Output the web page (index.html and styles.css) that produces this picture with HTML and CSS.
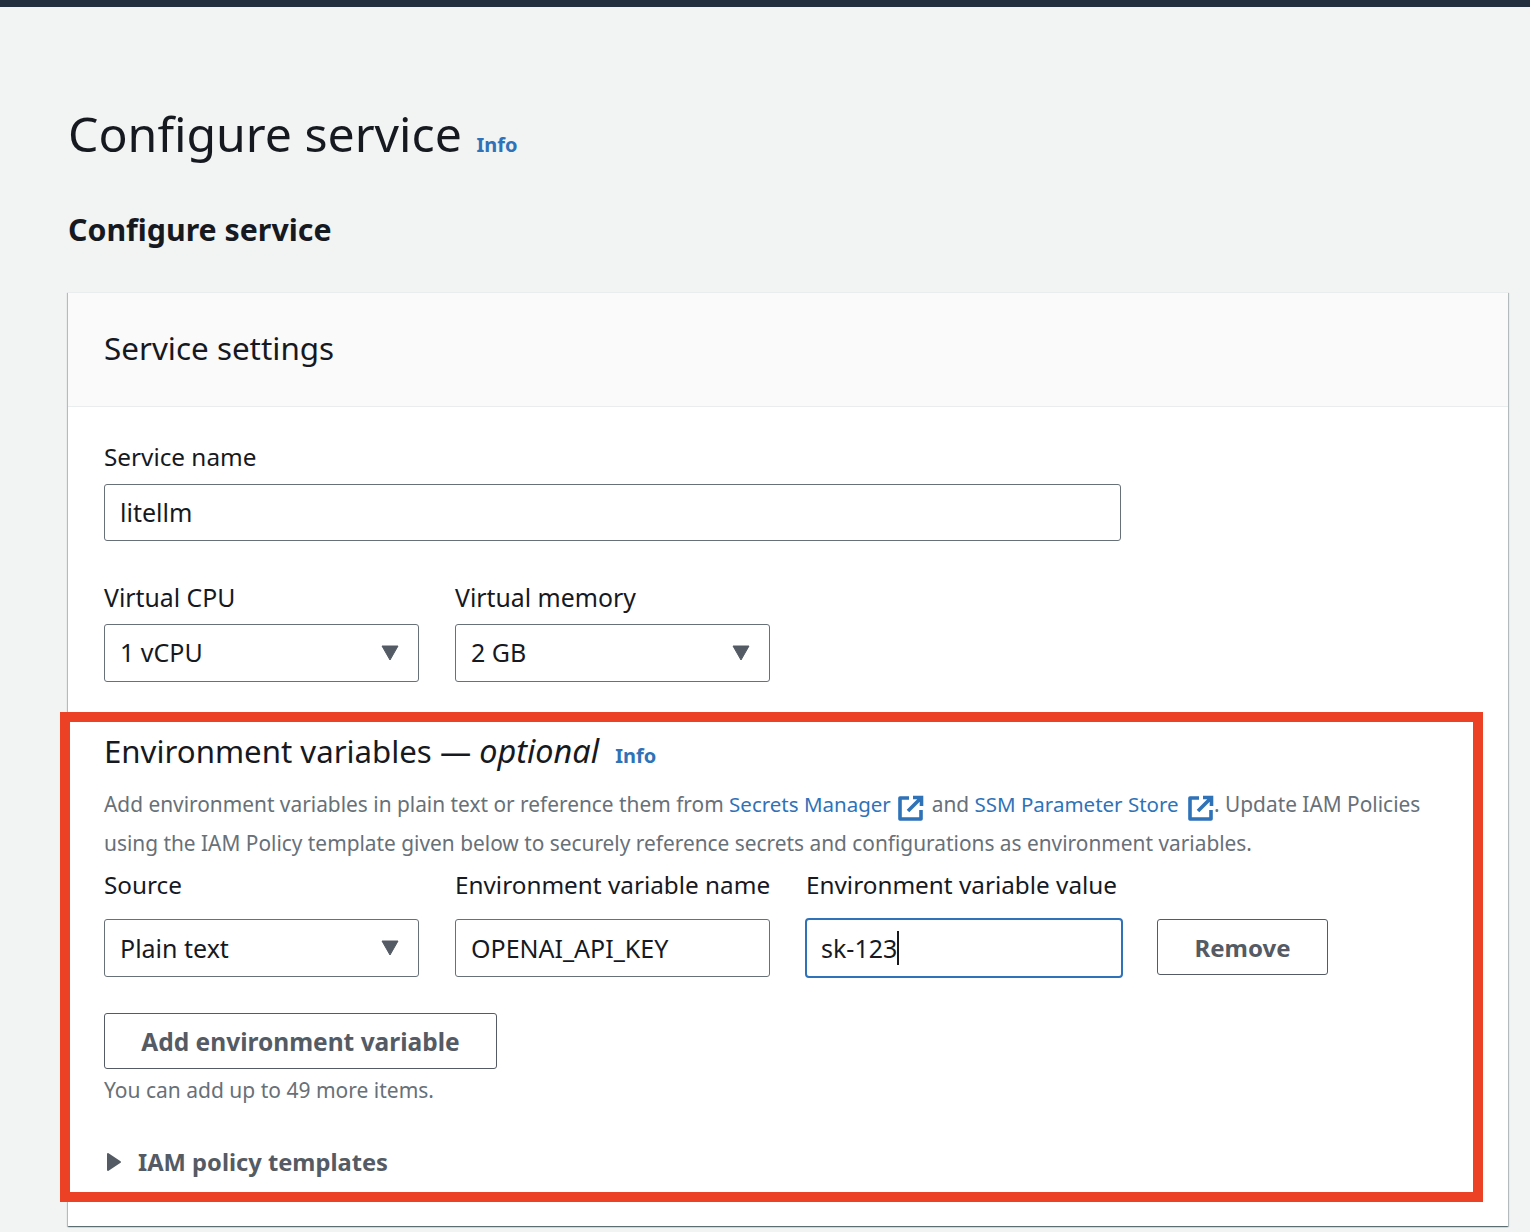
FILE: index.html
```html
<!DOCTYPE html>
<html lang="en">
<head>
    <meta charset="UTF-8">
    <title>Configure service</title>
    <link rel="stylesheet" href="styles.css">
</head>
<body>
    <div class="topbar"></div>

    <main class="page">
        <h1 class="page-title">Configure service <a class="info info-title">Info</a></h1>
        <h2 class="step-title">Configure service</h2>

        <section class="card">
            <header class="card-header">Service settings</header>
            <div class="card-body">
                <div class="group">
                    <label class="label">Service name</label>
                    <div class="field field-wide">litellm</div>
                </div>

                <div class="row row-cpu">
                    <div class="group">
                        <label class="label">Virtual CPU</label>
                        <div class="field field-select">1 vCPU
                            <svg class="caret-down" width="20" height="16" viewBox="0 0 20 16"><path d="M2 1h16l-8 14z" fill="#545b64" stroke="#545b64" stroke-linejoin="round"/></svg>
                        </div>
                    </div>
                    <div class="group">
                        <label class="label">Virtual memory</label>
                        <div class="field field-select">2 GB
                            <svg class="caret-down" width="20" height="16" viewBox="0 0 20 16"><path d="M2 1h16l-8 14z" fill="#545b64" stroke="#545b64" stroke-linejoin="round"/></svg>
                        </div>
                    </div>
                </div>

                <div class="env">
                    <h3 class="env-title">Environment variables — <em>optional</em> <a class="info info-env">Info</a></h3>
                    <p class="env-desc">Add environment variables in plain text or reference them from <a class="link">Secrets Manager</a>
                        <svg class="ext" width="26" height="26" viewBox="0 0 26 26"><path d="M11 3H2v21h21v-9" fill="none" stroke="#2f72b8" stroke-width="3.6" stroke-linejoin="round"/><path d="M15 2.500h8.500v8.500M23 3 10 16" fill="none" stroke="#2f72b8" stroke-width="3.6"/></svg>
                        and <a class="link">SSM Parameter Store</a>
                        <svg class="ext ext-last" width="26" height="26" viewBox="0 0 26 26"><path d="M11 3H2v21h21v-9" fill="none" stroke="#2f72b8" stroke-width="3.6" stroke-linejoin="round"/><path d="M15 2.500h8.500v8.500M23 3 10 16" fill="none" stroke="#2f72b8" stroke-width="3.6"/></svg>. Update IAM Policies using the IAM Policy template given below to securely reference secrets and configurations as environment variables.</p>

                    <div class="row row-env">
                        <div class="group">
                            <label class="label">Source</label>
                            <div class="field field-select">Plain text
                                <svg class="caret-down" width="20" height="16" viewBox="0 0 20 16"><path d="M2 1h16l-8 14z" fill="#545b64" stroke="#545b64" stroke-linejoin="round"/></svg>
                            </div>
                        </div>
                        <div class="group">
                            <label class="label">Environment variable name</label>
                            <div class="field">OPENAI_API_KEY</div>
                        </div>
                        <div class="group">
                            <label class="label">Environment variable value</label>
                            <div class="field field-focus"><span class="typed">sk-123</span></div>
                        </div>
                        <button class="btn btn-remove">Remove</button>
                    </div>

                    <button class="btn btn-add">Add environment variable</button>
                    <p class="hint">You can add up to 49 more items.</p>

                    <div class="expand">
                        <svg width="16" height="20" viewBox="0 0 16 20"><path d="M2 2l12 8-12 8z" fill="#545b64" stroke="#545b64" stroke-width="2" stroke-linejoin="round"/></svg>
                        <span>IAM policy templates</span>
                    </div>
                </div>
            </div>
        </section>
    </main>

    <div class="highlight"></div>
</body>
</html>
```

FILE: styles.css
```css
* {
    box-sizing: border-box;
}

body {
    margin: 0;
    height: 1232px;
    overflow: hidden;
    background-color: #f2f3f3;
    font-family: "Noto Sans", "Open Sans", sans-serif;
    color: #16191f;
}

.topbar {
    height: 7px;
    background-color: #232f3e;
}

.page {
    padding: 0 22px 0 68px;
}

.page-title {
    margin: 92px 0 0;
    font-size: 48.2px;
    line-height: 68px;
    font-weight: 400;
}

.info {
    color: #2f72b8;
    font-weight: 700;
    font-size: 20px;
}

.info-title {
    margin-left: 2px;
}

.step-title {
    margin: 27px 0 0;
    font-size: 30.3px;
    line-height: 48px;
    font-weight: 700;
}

.card {
    margin-top: 38px;
    height: 934px;
    background-color: #fff;
    border-top: 1px solid #eaeded;
    box-shadow: 0 1px 1px 0 rgba(0, 28, 36, 0.4), 1px 1px 1px 0 rgba(0, 28, 36, 0.2), -1px 1px 1px 0 rgba(0, 28, 36, 0.2);
}

.card-header {
    height: 114px;
    padding: 33px 36px 0;
    background-color: #fafafa;
    border-bottom: 1px solid #eaeded;
    font-size: 31.4px;
    line-height: 44px;
}

.card-body {
    padding: 33px 36px 0;
}

.label {
    display: block;
    font-size: 24.3px;
    line-height: 34px;
    margin-bottom: 10px;
    white-space: nowrap;
}

.field {
    position: relative;
    height: 58px;
    padding: 0 15px;
    border: 1px solid #687078;
    border-radius: 3px;
    background-color: #fff;
    font-size: 25px;
    line-height: 55px;
}

.field-wide {
    width: 1017px;
    height: 57px;
    margin-top: 10px;
}

.caret-down {
    position: absolute;
    right: 18px;
    top: 20px;
}

.field-focus {
    width: 318px;
    height: 60px;
    margin-top: -1px;
    margin-left: -1px;
    padding: 0 14px;
    border: 2px solid #2f72b8;
    border-radius: 4px;
}

.typed {
    border-right: 2px solid #16191f;
}

.row {
    display: grid;
    grid-template-columns: 315px 315px;
    column-gap: 36px;
}

.row-cpu {
    margin-top: 39px;
}

.row-cpu .label {
    font-size: 24.8px;
}

.row-cpu .field {
    margin-top: 10px;
}

.env {
    margin-top: 46px;
}

.env-title {
    margin: 0;
    font-size: 31.2px;
    line-height: 44px;
    font-weight: 400;
}

.env-title em {
    font-size: 32.4px;
}

.info-env {
    margin-left: 8px;
    font-style: normal;
}

.env-desc {
    margin: 7px 0 0;
    width: 1330px;
    color: #687078;
    font-size: 20.87px;
    line-height: 39px;
}

.link {
    color: #2f72b8;
    font-size: 20.5px;
}

.ext {
    vertical-align: -9px;
    margin: 0 2px;
}

.ext-last {
    margin: 0 0 0 4px;
}

.row-env {
    margin-top: 5px;
    grid-template-columns: 315px 315px 315px 171px;
    align-items: start;
}

.row-env .label {
    margin-bottom: 17px;
}

.row-env .field {
    line-height: 56px;
}

.btn {
    height: 56px;
    background-color: #fff;
    border: 1px solid #545b64;
    border-radius: 3px;
    color: #545b64;
    font-family: inherit;
    font-size: 24.5px;
    font-weight: 700;
}

.btn-remove {
    margin-top: 51px;
    width: 171px;
    font-size: 24px;
}

.btn-add {
    display: block;
    margin-top: 35px;
    width: 393px;
}

.hint {
    margin: 4px 0 0;
    color: #687078;
    font-size: 21px;
    line-height: 34px;
}

.expand {
    display: flex;
    align-items: center;
    gap: 16px;
    margin-top: 38px;
    margin-left: 2px;
    color: #545b64;
    font-size: 23.7px;
    font-weight: 700;
    line-height: 34px;
}

.highlight {
    position: absolute;
    left: 60px;
    top: 712px;
    width: 1423px;
    height: 490px;
    border: 10px solid #ec4125;
    pointer-events: none;
}
```
